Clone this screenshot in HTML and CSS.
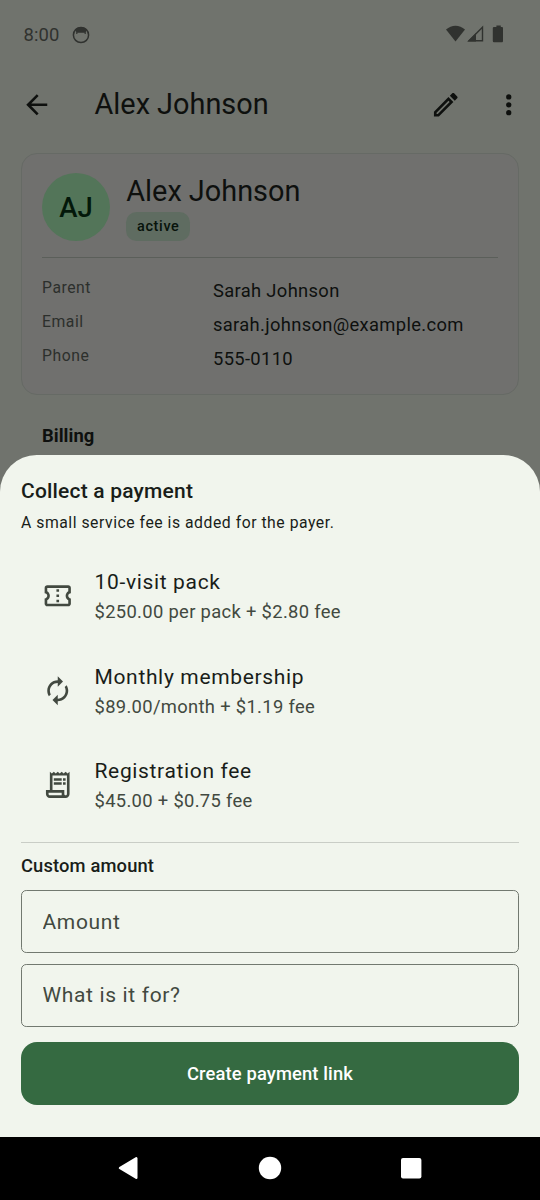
FILE: index.html
```html
<!DOCTYPE html>
<html lang="en">
<head>
<meta charset="utf-8">
<title>Collect a payment</title>
<link rel="stylesheet" href="styles.css">
</head>
<body>
<div class="phone">
  <main class="page">
    <div class="status">
      <span class="clock">8:00</span>
      <svg class="face" viewBox="0 0 18 18"><circle cx="9" cy="9" r="7.6" fill="none" stroke="currentColor" stroke-width="1.5"/><path fill="currentColor" d="M3.4 3.6C6 .4 12 .4 14.6 3.600L13.800 6V8H12.600V6.800H5.400V8H4.200V6z"/></svg>
      <svg class="signals" viewBox="0 0 60 20"><path fill="currentColor" d="M1 5.500C6.500.400 14.500.400 20 5.500L10.500 17.600z"/><path fill="none" stroke="currentColor" stroke-width="1.400" d="M24 16.800L37.500 3.200V16.800z"/><path fill="currentColor" d="M22.500 17.500L31 9V17.500z"/><path fill="currentColor" d="M49 3h2.400V1.500h4.400V3H57q1 0 1 1V17q0 1.300-1 1.300h-8q-1.200 0-1.200-1.300V4q0-1 1.200-1z"/></svg>
    </div>
    <header class="appbar">
      <svg class="icon" viewBox="0 0 24 24"><path d="M20 11H7.830l5.590-5.590L12 4l-8 8 8 8 1.410-1.410L7.830 13H20v-2z"/></svg>
      <h1 class="appbar-title">Alex Johnson</h1>
      <svg class="icon" viewBox="0 0 24 24"><path d="M14.060 9.020l.920.920L5.920 19H5v-.920l9.060-9.060M17.660 3c-.250 0-.510.100-.700.290l-1.830 1.830 3.750 3.750 1.830-1.830c.390-.390.390-1.020 0-1.410l-2.340-2.340c-.200-.200-.450-.290-.710-.290zm-3.600 3.190L3 17.250V21h3.750L17.810 9.940l-3.750-3.750z"/></svg>
      <svg class="icon" viewBox="0 0 24 24"><circle cx="12" cy="6" r="2"/><circle cx="12" cy="12" r="2"/><circle cx="12" cy="18" r="2"/></svg>
    </header>
    <section class="card">
      <div class="person">
        <div class="avatar">AJ</div>
        <div class="identity">
          <h2 class="name">Alex Johnson</h2>
          <span class="chip">active</span>
        </div>
      </div>
      <dl class="details">
        <dt>Parent</dt><dd>Sarah Johnson</dd>
        <dt>Email</dt><dd>sarah.johnson@example.com</dd>
        <dt>Phone</dt><dd>555-0110</dd>
      </dl>
    </section>
    <h3 class="section-title">Billing</h3>
  </main>

  <section class="sheet">
    <h2 class="sheet-title">Collect a payment</h2>
    <p class="sheet-note">A small service fee is added for the payer.</p>
    <ul class="options">
      <li class="option">
        <svg class="icon" viewBox="0 0 24 24"><path d="M22 10V6c0-1.110-.900-2-2-2H4c-1.100 0-1.990.890-1.990 2v4c1.100 0 1.990.900 1.990 2s-.890 2-2 2v4c0 1.100.900 2 2 2h16c1.100 0 2-.900 2-2v-4c-1.100 0-2-.900-2-2s.900-2 2-2zm-2-1.460c-1.190.690-2 1.990-2 3.460s.810 2.770 2 3.460V18H4v-2.540c1.190-.690 2-1.990 2-3.460 0-1.480-.800-2.770-1.990-3.460L4 6h16v2.540zM11 15h2v2h-2zm0-4h2v2h-2zm0-4h2v2h-2z"/></svg>
        <div class="option-text"><div class="option-title">10-visit pack</div><div class="option-price">$250.00 per pack + $2.80 fee</div></div>
      </li>
      <li class="option">
        <svg class="icon" viewBox="0 0 24 24"><path d="M12 6v3l4-4-4-4v3c-4.420 0-8 3.580-8 8 0 1.570.460 3.030 1.240 4.260L6.700 14.800c-.450-.830-.700-1.790-.700-2.800 0-3.310 2.690-6 6-6zm6.760 1.740L17.300 9.200c.440.840.700 1.790.700 2.800 0 3.310-2.690 6-6 6v-3l-4 4 4 4v-3c4.420 0 8-3.580 8-8 0-1.570-.460-3.030-1.240-4.260z"/></svg>
        <div class="option-text"><div class="option-title">Monthly membership</div><div class="option-price">$89.00/month + $1.19 fee</div></div>
      </li>
      <li class="option">
        <svg class="icon" viewBox="0 0 24 24"><path d="M19.500 3.500L18 2l-1.500 1.500L15 2l-1.500 1.500L12 2l-1.500 1.500L9 2 7.500 3.500 6 2v14H3v3c0 1.660 1.340 3 3 3h12c1.660 0 3-1.340 3-3V2l-1.500 1.500zM15 20H6c-.550 0-1-.450-1-1v-1h10v2zm4-1c0 .550-.450 1-1 1s-1-.450-1-1v-3H8V5h11v14z"/><path d="M9 7h6v2H9zM16 7h2v2h-2zM9 10h6v2H9zM16 10h2v2h-2z"/></svg>
        <div class="option-text"><div class="option-title">Registration fee</div><div class="option-price">$45.00 + $0.75 fee</div></div>
      </li>
    </ul>
    <form class="custom">
      <h3 class="custom-title">Custom amount</h3>
      <input class="field" type="text" placeholder="Amount">
      <input class="field" type="text" placeholder="What is it for?">
      <button class="submit" type="button">Create payment link</button>
    </form>
  </section>

  <nav class="navbar">
    <svg viewBox="0 0 24 24"><path d="M19.300 2.300V21.700L3 12z" fill="#fff" stroke="#fff" stroke-width="2.400" stroke-linejoin="round"/></svg>
    <svg viewBox="0 0 24 24"><circle cx="12" cy="12" r="11.200" fill="#fff"/></svg>
    <svg viewBox="0 0 24 24"><rect x="2" y="2" width="20.400" height="20.400" rx="2" fill="#fff"/></svg>
  </nav>
</div>
</body>
</html>
```
FILE: styles.css
```css
* { box-sizing: border-box; margin: 0; padding: 0; }

body { font-family: Roboto, sans-serif; }

.phone {
  width: 540px;
  height: 1200px;
  display: flex;
  flex-direction: column;
  overflow: hidden;
  background: #70736d;
}

.icon { width: 31.5px; height: 31.5px; flex: none; fill: currentColor; }

/* Dimmed page behind the sheet */
.page { height: 454.5px; flex: none; color: #0e100e; }

.status {
  height: 68px;
  padding: 0 35.200px 0 23.5px;
  display: flex;
  align-items: center;
  color: #30322f;
}
.clock { font-size: 18.4px; letter-spacing: .1px; padding-top: 1px; }
.face { width: 18px; height: 18px; margin: 1px 0 0 13px; }
.signals { width: 60px; height: 20px; margin-left: auto; }

.appbar {
  height: 73.5px;
  padding: 0 16px 0 21px;
  display: flex;
  align-items: center;
}
.appbar-title {
  flex: 1;
  margin-left: 42px;
  font-size: 28.875px;
  line-height: 36.75px;
  font-weight: 400;
}
.appbar .icon:nth-last-child(2) { margin-right: 31.5px; }

.card {
  height: 242.500px;
  margin: 11px 21px 0;
  padding: 19.5px 20px;
  border: 1.300px solid #666a65;
  border-radius: 16px;
  background: #70706e;
}
.person {
  display: flex;
  gap: 16px;
  padding-bottom: 15.500px;
  border-bottom: 1.300px solid #5b5f5a;
}
.avatar {
  width: 68.25px;
  height: 68.25px;
  border-radius: 50%;
  background: #537559;
  color: #03180a;
  font-size: 27.500px;
  font-weight: 500;
  line-height: 69px;
  text-align: center;
}
.name { font-size: 28.875px; line-height: 36.75px; font-weight: 400; }
.chip {
  display: block;
  width: 64px;
  height: 28.500px;
  margin-top: 2.500px;
  border-radius: 10.500px;
  background: #5f6c61;
  color: #07130b;
  font-size: 14.438px;
  font-weight: 500;
  letter-spacing: .656px;
  line-height: 30.500px;
  text-align: center;
}
.details {
  display: grid;
  grid-template-columns: 171px 1fr;
  grid-auto-rows: 34.100px;
  margin-top: 19px;
}
.details dt { font-size: 15.75px; line-height: 21px; letter-spacing: .525px; color: #2c2f2c; }
.details dd { font-size: 18.375px; line-height: 27.500px; letter-spacing: .328px; }
.section-title {
  margin: 27.500px 42px 0;
  font-size: 18.375px;
  line-height: 26.25px;
  font-weight: 700;
  letter-spacing: .06px;
}

/* Bottom sheet */
.sheet {
  height: 682.500px;
  flex: none;
  padding: 21.200px 21px 0;
  border-radius: 36.75px 36.75px 0 0;
  background: #f1f5ed;
  color: #191d19;
}
.sheet-title { font-size: 21px; line-height: 31.500px; font-weight: 500; letter-spacing: .197px; }
.sheet-note {
  margin-top: 4.550px;
  font-size: 15.75px;
  line-height: 21px;
  letter-spacing: .525px;
}
.options {
  margin-top: 16px;
  padding-bottom: 10px;
  list-style: none;
  border-bottom: 1.300px solid #c9cdc6;
}
.option {
  height: 94.500px;
  padding-left: 21px;
  display: flex;
  align-items: center;
  gap: 21px;
}
.option .icon { color: #424940; }
.option-text { padding-top: 1px; }
.option-title { font-size: 21px; line-height: 31px; letter-spacing: .656px; }
.option-price { font-size: 18.375px; line-height: 27.500px; letter-spacing: .328px; color: #424940; }

.custom { display: flex; flex-direction: column; gap: 10.500px; padding-top: 10.250px; }
.custom-title { font-size: 18.375px; line-height: 26.250px; font-weight: 500; letter-spacing: .131px; }
.field {
  width: 100%;
  height: 63px;
  padding: 0 20.500px;
  border: 1.300px solid #727970;
  border-radius: 5.250px;
  background: transparent;
  font: 400 21px Roboto, sans-serif;
  letter-spacing: .656px;
}
.field::placeholder { color: #424940; opacity: 1; }
.submit {
  height: 63px;
  margin-top: 4.900px;
  border: 0;
  border-radius: 16px;
  background: #356a41;
  color: #fff;
  font: 500 18.375px Roboto, sans-serif;
  letter-spacing: .131px;
}

.navbar {
  flex: 1;
  padding-bottom: 1px;
  display: flex;
  align-items: center;
  justify-content: center;
  gap: 116.800px;
  background: #000;
}
.navbar svg { width: 24px; height: 24px; }
```
